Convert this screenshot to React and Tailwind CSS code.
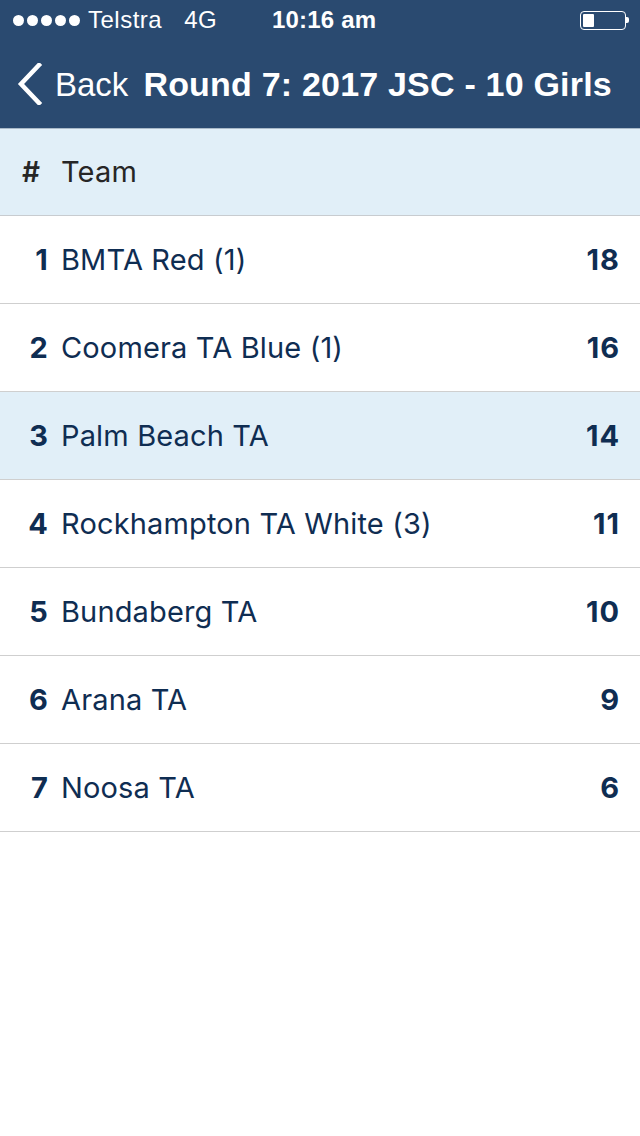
import React from "react";

const rows = [
  { n: 1, team: "BMTA Red (1)", pts: 18 },
  { n: 2, team: "Coomera TA Blue (1)", pts: 16 },
  { n: 3, team: "Palm Beach TA", pts: 14, hl: true },
  { n: 4, team: "Rockhampton TA White (3)", pts: 11 },
  { n: 5, team: "Bundaberg TA", pts: 10 },
  { n: 6, team: "Arana TA", pts: 9 },
  { n: 7, team: "Noosa TA", pts: 6 },
];

export default function App() {
  return (
    <div className="w-[640px] min-h-[1136px] bg-white" style={{ fontFamily: "Inter, 'Liberation Sans', sans-serif" }}>
      <div className="bg-[#2a4a70] text-white" style={{ fontFamily: "'Liberation Sans', Arial, sans-serif" }}>
        <div className="h-[40px] flex items-center relative pl-[13px] pr-[11px]">
          <div className="flex items-center gap-[3px]">
            {[0, 1, 2, 3, 4].map((i) => (
              <span key={i} className="w-[11px] h-[11px] rounded-full bg-white block" />
            ))}
          </div>
          <span className="ml-[8px] text-[24px] leading-none tracking-[0.5px]">Telstra</span>
          <span className="ml-[22px] text-[24px] leading-none tracking-[0.5px]">4G</span>
          <span className="absolute left-[272px] top-[8px] text-[24px] leading-none font-semibold tracking-[0.2px]">10:16 am</span>
          <div className="ml-auto flex items-center">
            <div className="w-[46px] h-[19px] border-[1.5px] border-white rounded-[4px] p-[2px] flex">
              <div className="w-[11px] h-full bg-white rounded-[1px]" />
            </div>
            <div className="w-[3px] h-[6px] bg-white rounded-r-[2px]" />
          </div>
        </div>
        <div className="h-[88px] flex items-center pl-[17px]">
          <svg width="26" height="42" viewBox="0 0 26 42" className="shrink-0">
            <path d="M22 2 L4 21 L22 40" fill="none" stroke="white" strokeWidth="4.5" strokeLinecap="square" />
          </svg>
          <span className="ml-[12px] text-[33px] leading-none">Back</span>
          <span className="ml-[15px] text-[34px] leading-none font-bold whitespace-nowrap tracking-[0.2px]">Round 7: 2017 JSC - 10 Girls</span>
        </div>
      </div>
      <div className="h-[88px] bg-[#e1eff8] border-t border-[#a9b9c8] border-b border-b-[#c8ccd0] flex items-center text-[#262626] text-[28px]">
        <span className="w-[61px] pl-[22px] font-semibold">#</span>
        <span className="text-[29px] tracking-[0.15px]">Team</span>
      </div>
      {rows.map((r) => (
        <div
          key={r.n}
          className={`h-[88px] border-b border-[#cfcfcf] flex items-center text-[29px] tracking-[0.15px] text-[#0f2d52] ${r.hl ? "bg-[#e1eff8]" : "bg-white"}`}
        >
          <span className="w-[61px] pr-[13px] text-right font-bold">{r.n}</span>
          <span className="flex-1">{r.team}</span>
          <span className="pr-[20px] font-bold tracking-[1px]">{r.pts}</span>
        </div>
      ))}
    </div>
  );
}
